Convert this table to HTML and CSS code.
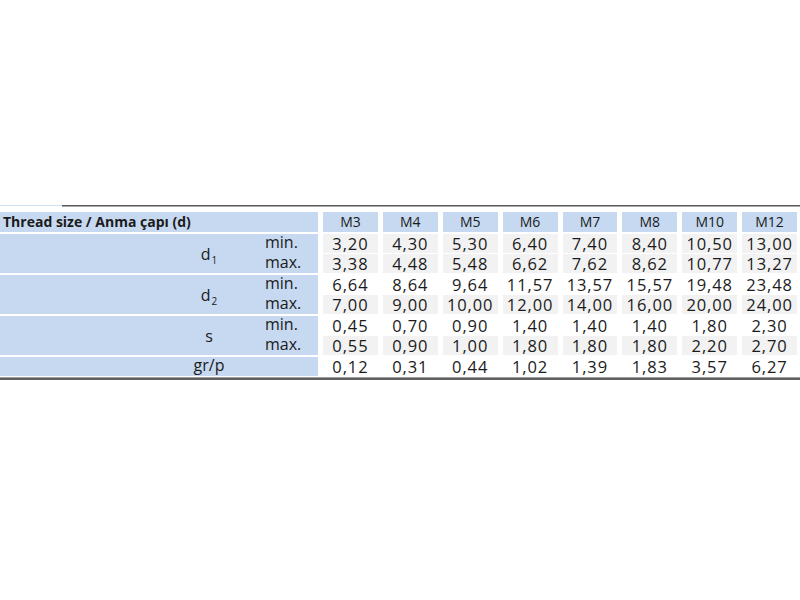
FILE: index.html
```html
<!DOCTYPE html>
<html>
<head>
<meta charset="utf-8">
<link rel="stylesheet" href="styles.css">
</head>
<body>
<div class="page">
  <div class="topline"><div class="topline-left"></div><div class="topline-right"></div></div>
  <div class="table">
    <div class="group head">
      <div class="hcell title">Thread size / Anma çapı (d)</div>
      <div class="hcell">M3</div><div class="hcell">M4</div><div class="hcell">M5</div><div class="hcell">M6</div>
      <div class="hcell">M7</div><div class="hcell">M8</div><div class="hcell">M10</div><div class="hcell">M12</div>
    </div>
    <div class="group two">
      <div class="label"><div class="name"><span>d<sub>1</sub></span></div><div class="mm">min.<br>max.</div></div>
      <div class="cell g">3,20</div><div class="cell g">4,30</div><div class="cell g">5,30</div><div class="cell g">6,40</div>
      <div class="cell g">7,40</div><div class="cell g">8,40</div><div class="cell g">10,50</div><div class="cell g">13,00</div>
      <div class="cell g">3,38</div><div class="cell g">4,48</div><div class="cell g">5,48</div><div class="cell g">6,62</div>
      <div class="cell g">7,62</div><div class="cell g">8,62</div><div class="cell g">10,77</div><div class="cell g">13,27</div>
    </div>
    <div class="group two">
      <div class="label"><div class="name"><span>d<sub>2</sub></span></div><div class="mm">min.<br>max.</div></div>
      <div class="cell">6,64</div><div class="cell">8,64</div><div class="cell">9,64</div><div class="cell">11,57</div>
      <div class="cell">13,57</div><div class="cell">15,57</div><div class="cell">19,48</div><div class="cell">23,48</div>
      <div class="cell g">7,00</div><div class="cell g">9,00</div><div class="cell g">10,00</div><div class="cell g">12,00</div>
      <div class="cell g">14,00</div><div class="cell g">16,00</div><div class="cell g">20,00</div><div class="cell g">24,00</div>
    </div>
    <div class="group two">
      <div class="label"><div class="name"><span>s</span></div><div class="mm">min.<br>max.</div></div>
      <div class="cell">0,45</div><div class="cell">0,70</div><div class="cell">0,90</div><div class="cell">1,40</div>
      <div class="cell">1,40</div><div class="cell">1,40</div><div class="cell">1,80</div><div class="cell">2,30</div>
      <div class="cell g">0,55</div><div class="cell g">0,90</div><div class="cell g">1,00</div><div class="cell g">1,80</div>
      <div class="cell g">1,80</div><div class="cell g">1,80</div><div class="cell g">2,20</div><div class="cell g">2,70</div>
    </div>
    <div class="group one">
      <div class="label"><div class="name"><span>gr/p</span></div><div class="mm"></div></div>
      <div class="cell">0,12</div><div class="cell">0,31</div><div class="cell">0,44</div><div class="cell">1,02</div>
      <div class="cell">1,39</div><div class="cell">1,83</div><div class="cell">3,57</div><div class="cell">6,27</div>
    </div>
  </div>
  <div class="bottomline"></div>
</div>
</body>
</html>
```
FILE: styles.css
```css
html, body {
  margin: 0;
  padding: 0;
  background: #ffffff;
}
.page {
  padding-top: 205px;
  font-family: "Open Sans", "Noto Sans", sans-serif;
  color: #1b1b1b;
}
.topline {
  display: flex;
  height: 3px;
  margin-bottom: 3px;
}
.topline-left {
  width: 62px;
  height: 1px;
  background: #cfe0f0;
}
.topline-right {
  flex: 1;
  background: #5a5a5a;
  border-bottom: 1px solid #a8a8a8;
  height: 1px;
}
.table {
  width: 797px;
  display: flex;
  flex-direction: column;
  gap: 2px;
}
.group {
  display: grid;
  grid-template-columns: 318px repeat(8, 1fr);
  column-gap: 5px;
  row-gap: 1px;
}
.head {
  grid-template-rows: 20px;
  margin-top: 1px;
}
.two {
  grid-template-rows: 19px 19px;
}
.one {
  grid-template-rows: 19px;
}
.hcell {
  background: #c6d9f0;
  font-size: 14px;
  text-align: center;
  line-height: 20px;
}
.hcell.title {
  text-align: left;
  font-weight: 700;
  font-size: 14px;
  padding-left: 3px;
}
.label {
  grid-row: 1 / -1;
  background: #c6d9f0;
  display: flex;
  font-size: 16px;
}
.name {
  width: 258px;
  padding-left: 160px;
  box-sizing: border-box;
  display: flex;
  align-items: center;
  justify-content: center;
  line-height: 18px;
}
.name sub {
  font-size: 10px;
  vertical-align: -4px;
  line-height: 0;
  margin-left: 1px;
}
.mm {
  padding-left: 7px;
  line-height: 19.5px;
  margin-top: -1px;
}
.one .name {
  align-items: flex-start;
  line-height: 17px;
}
.cell {
  text-align: center;
  font-size: 16.5px;
  letter-spacing: 0.9px;
  line-height: 19px;
}
.cell.g {
  background: #f2f2f2;
}
.bottomline {
  width: 800px;
  height: 1px;
  background: #9a9a9a;
  border-bottom: 2px solid #606060;
  margin-top: 1px;
}
```
